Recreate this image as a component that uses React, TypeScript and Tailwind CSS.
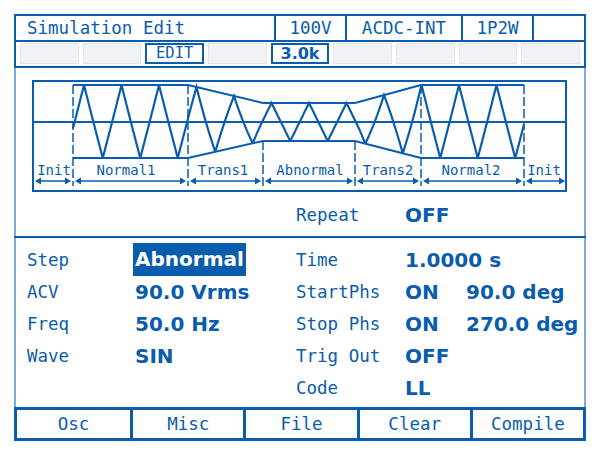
import React from "react";

const B = "#0a5cae";

function Wave() {
  const T = 37.5;
  const x0 = 84 - T / 4;
  const top = (x: number) =>
    x < 188 ? 85 : x < 263 ? 85 + ((x - 188) / 75) * 18 : x < 355 ? 103 : x < 421 ? 103 - ((x - 355) / 66) * 18 : 85;
  const bot = (x: number) =>
    x < 188 ? 158 : x < 263 ? 158 - ((x - 188) / 75) * 17 : x < 355 ? 141 : x < 421 ? 141 + ((x - 355) / 66) * 17 : 158;
  const pts: string[] = [];
  for (let x = 73; x <= 524.01; x += 0.5) {
    let p = ((x - x0) / T) % 1;
    if (p < 0) p += 1;
    const f = p < 0.25 ? 4 * p : p < 0.75 ? 2 - 4 * p : 4 * p - 4;
    const y = f >= 0 ? 122 - f * (122 - top(x)) : 122 - f * (bot(x) - 122);
    pts.push(`${x.toFixed(1)},${y.toFixed(1)}`);
  }
  const segs: [number, number][] = [
    [35, 71],
    [75, 186],
    [190, 261],
    [265, 353],
    [357, 419],
    [423, 522],
    [526, 565],
  ];
  const labels: [string, number][] = [
    ["Init", 54],
    ["Normal1", 126],
    ["Trans1", 223],
    ["Abnormal", 310],
    ["Trans2", 388],
    ["Normal2", 471],
    ["Init", 544],
  ];
  const env = [
    [73, 85, 188, 85],
    [73, 158, 188, 158],
    [188, 85, 263, 103],
    [188, 158, 263, 141],
    [263, 103, 355, 103],
    [263, 141, 355, 141],
    [355, 103, 421, 85],
    [355, 141, 421, 158],
    [421, 85, 524, 85],
    [421, 158, 524, 158],
  ];
  const vlines: [number, number][] = [
    [73, 85],
    [188, 85],
    [263, 141],
    [355, 141],
    [421, 85],
    [524, 85],
  ];
  return (
    <svg width="535" height="112" viewBox="32 80 535 112" className="block">
      <rect x="33" y="81" width="533" height="110" fill="white" stroke={B} strokeWidth="2" />
      <line x1="32" y1="122" x2="567" y2="122" stroke={B} strokeWidth="2" />
      {env.map((e, i) => (
        <line key={i} x1={e[0]} y1={e[1]} x2={e[2]} y2={e[3]} stroke={B} strokeWidth="2" />
      ))}
      {vlines.map(([x, y], i) => (
        <line key={i} x1={x} y1={y} x2={x} y2={186} stroke={B} strokeWidth="1.5" strokeDasharray="9 3" />
      ))}
      <polyline points={pts.join(" ")} fill="none" stroke={B} strokeWidth="2.2" strokeLinejoin="miter" />
      {segs.map(([a, b], i) => (
        <g key={i}>
          <line x1={a + 3} y1="181" x2={b - 3} y2="181" stroke={B} strokeWidth="1.5" />
          <polygon points={`${a},181 ${a + 6},177.5 ${a + 6},184.5`} fill={B} />
          <polygon points={`${b},181 ${b - 6},177.5 ${b - 6},184.5`} fill={B} />
        </g>
      ))}
      {labels.map(([t, x], i) => (
        <text
          key={i}
          x={x}
          y="175"
          textAnchor="middle"
          fontFamily="'DejaVu Sans Mono', monospace"
          fontSize="14"
          fill={B}
        >
          {t}
        </text>
      ))}
    </svg>
  );
}

const mono = "font-['DejaVu_Sans_Mono',monospace]";
const bold = "font-['DejaVu_Sans',sans-serif] font-bold";

function Label({ children }: { children?: React.ReactNode }) {
  return <div className={`${mono} text-[17.5px] text-[#0a5cae] leading-[32px] h-[32px]`}>{children}</div>;
}
function Val({ children }: { children?: React.ReactNode }) {
  return <div className={`${bold} text-[20px] text-[#0a5cae] leading-[32px] h-[32px] whitespace-nowrap`}>{children}</div>;
}

export default function App() {
  return (
    <div className="w-[600px] h-[454px] bg-white pt-[14px] pl-[14px]">
      <div className="w-[572px] flex flex-col text-[#0a5cae]">
        {/* header row 1 */}
        <div className={`h-[28px] border-2 border-[#0a5cae] grid grid-cols-[258px_71px_116px_71px_1fr] ${mono} text-[17.5px]`}>
          <div className="pl-[11px] leading-[24px]">Simulation Edit</div>
          <div className="border-l-2 border-[#0a5cae] text-center leading-[24px]">100V</div>
          <div className="border-l-2 border-[#0a5cae] text-center leading-[24px]">ACDC-INT</div>
          <div className="border-l-2 border-[#0a5cae] text-center leading-[24px]">1P2W</div>
          <div className="border-l-2 border-[#0a5cae]"></div>
        </div>
        {/* header row 2 */}
        <div className="h-[26px] border-x-2 border-b-2 border-[#0a5cae] grid grid-cols-9 gap-[4px] px-[4px] pt-[1px] pb-[2px]">
          <div className="bg-[#f1f2f6] border border-[#e2e5ec]"></div>
          <div className="bg-[#f1f2f6] border border-[#e2e5ec]"></div>
          <div className={`border-2 border-[#0a5cae] bg-white ${mono} text-[15.5px] leading-[17px] text-center`}>EDIT</div>
          <div className="bg-[#f1f2f6] border border-[#e2e5ec]"></div>
          <div className={`border-2 border-[#0a5cae] bg-white ${bold} text-[16px] leading-[17px] text-center`}>3.0k</div>
          <div className="bg-[#f1f2f6] border border-[#e2e5ec]"></div>
          <div className="bg-[#f1f2f6] border border-[#e2e5ec]"></div>
          <div className="bg-[#f1f2f6] border border-[#e2e5ec]"></div>
          <div className="bg-[#f1f2f6] border border-[#e2e5ec]"></div>
        </div>
        {/* middle */}
        <div className="border-x-2 border-[#7ea9d8] flex flex-col pt-[12px] pb-[3px]">
          <div className="ml-[16px]">
            <Wave />
          </div>
          <div className="mt-[7px] mb-[5px] h-[32px] flex pl-[280px]">
            <div className="w-[109px]">
              <Label>Repeat</Label>
            </div>
            <Val>OFF</Val>
          </div>
          <div className="border-t-2 border-[#0a5cae] -mx-[2px]"></div>
          <div className="pt-[6px] pl-[11px] grid grid-cols-[108px_161px_109px_61px_1fr]">
            <Label>Step</Label>
            <div className="h-[32px]">
              <span className={`inline-block ${bold} text-[20px] leading-[33px] h-[33px] -mt-[1px] -ml-[2px] px-[2px] bg-[#0a5cae] text-white`}>
                Abnormal
              </span>
            </div>
            <Label>Time</Label>
            <Val>1.0000 s</Val>
            <div></div>

            <Label>ACV</Label>
            <Val>90.0 Vrms</Val>
            <Label>StartPhs</Label>
            <Val>ON</Val>
            <Val>90.0 deg</Val>

            <Label>Freq</Label>
            <Val>50.0 Hz</Val>
            <Label>Stop Phs</Label>
            <Val>ON</Val>
            <Val>270.0 deg</Val>

            <Label>Wave</Label>
            <Val>SIN</Val>
            <Label>Trig Out</Label>
            <Val>OFF</Val>
            <div></div>

            <div></div>
            <div></div>
            <Label>Code</Label>
            <Val>LL</Val>
            <div></div>
          </div>
        </div>
        {/* bottom bar */}
        <div className={`h-[34px] border-[3px] border-[#0a5cae] grid grid-cols-5 ${mono} text-[17.5px]`}>
          {["Osc", "Misc", "File", "Clear", "Compile"].map((t, i) => (
            <div
              key={t}
              className={`text-center leading-[28px] ${i > 0 ? "border-l-[3px] border-[#0a5cae]" : ""}`}
            >
              {t}
            </div>
          ))}
        </div>
      </div>
    </div>
  );
}
